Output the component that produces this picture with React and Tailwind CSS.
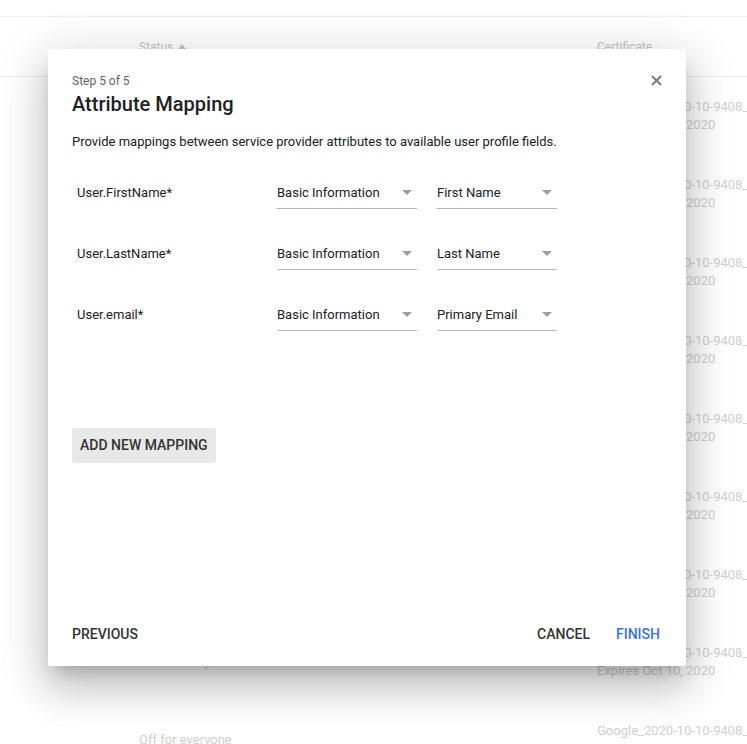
import React from "react";

const rows = [
  "On for everyone",
  "Off for everyone",
  "On for everyone",
  "Off for everyone",
  "On for everyone",
  "Off for everyone",
  "On for everyone",
  "Off for everyone",
  "Off for everyone",
];

const mappings = [
  { label: "User.FirstName*", a: "Basic Information", b: "First Name" },
  { label: "User.LastName*", a: "Basic Information", b: "Last Name" },
  { label: "User.email*", a: "Basic Information", b: "Primary Email" },
];

function Arrow() {
  return (
    <svg width="10" height="5" viewBox="0 0 10 5" className="shrink-0">
      <path d="M0 0 L10 0 L5 5 Z" fill="#9e9e9e" />
    </svg>
  );
}

function Select({ value, width }) {
  return (
    <div
      className={`flex h-8 items-center justify-between border-b border-[#b5b5b5] pr-[5px] ${width}`}
    >
      <span className="text-[13px] leading-5 text-[#212121]">{value}</span>
      <Arrow />
    </div>
  );
}

export default function App() {
  return (
    <div
      className="relative h-[744px] w-[747px] overflow-hidden bg-white"
      style={{ fontFamily: "Roboto, 'Noto Sans', sans-serif" }}
    >
      {/* Background table */}
      <div className="flex flex-col">
        <div className="h-[17px] border-b border-[#f0f0f0]" />
        <div className="flex h-[60px] items-center border-b border-[#ececec] text-[12px] text-[#c4c4c4]">
          <div className="flex w-[597px] shrink-0 items-center gap-[5px] pl-[139px]">
            <span>Status</span>
            <svg width="8" height="5" viewBox="0 0 8 5">
              <path d="M0 5 L4 0 L8 5 Z" fill="#c4c4c4" />
            </svg>
          </div>
          <div>Certificate</div>
        </div>
        {rows.map((s, i) => (
          <div
            key={i}
            className="flex h-[78px] shrink-0 items-center text-[13px] text-[#cfcfcf]"
          >
            <div className="w-[597px] shrink-0 pl-[139px]">{s}</div>
            <div className="flex flex-col whitespace-nowrap leading-[18px]">
              <span>Google_2020-10-10-9408_SAML2_0.pem</span>
              <span>Expires Oct 10, 2020</span>
            </div>
          </div>
        ))}
      </div>

      {/* Dialog */}
      <div className="absolute left-[48px] top-[49px] flex h-[617px] w-[638px] flex-col rounded-[2px] bg-white shadow-[0_11px_15px_-7px_rgba(0,0,0,0.2),0_24px_38px_3px_rgba(0,0,0,0.14),0_9px_46px_8px_rgba(0,0,0,0.12)]">
        <button className="absolute right-[24px] top-[25px] flex h-[12px] w-[12px] items-center justify-center">
          <svg width="11" height="11" viewBox="0 0 11 11">
            <path
              d="M1 1 L10 10 M10 1 L1 10"
              stroke="#7a7a7a"
              strokeWidth="2"
            />
          </svg>
        </button>

        <div className="flex flex-col px-6 pt-6">
          <div className="text-[12px] leading-4 text-[#5f6368]">Step 5 of 5</div>
          <div className="mt-px text-[20px] font-medium leading-7 text-[#202124]">
            Attribute Mapping
          </div>
          <div className="mt-[14px] text-[13px] leading-5 text-[#202124]">
            Provide mappings between service provider attributes to available
            user profile fields.
          </div>

          <div className="mt-[21px] flex flex-col gap-[21px]">
            {mappings.map((m) => (
              <div key={m.label} className="flex h-10 items-center">
                <div className="w-[205px] pl-[5px] text-[13px] leading-5 text-[#212121]">
                  {m.label}
                </div>
                <div className="flex items-center gap-5">
                  <Select value={m.a} width="w-[140px]" />
                  <Select value={m.b} width="w-[120px]" />
                </div>
              </div>
            ))}
          </div>

          <div className="mt-[93px] flex">
            <button className="h-[35px] rounded-[2px] bg-[#e8e8e8] px-2 text-[14px] font-medium text-[#333333]">
              ADD NEW MAPPING
            </button>
          </div>
        </div>

        <div className="mt-auto flex items-center justify-between pb-[22px] pl-6 pr-[26px] text-[14px] font-medium leading-5">
          <button className="text-[#333333]">PREVIOUS</button>
          <div className="flex items-center gap-[26px]">
            <button className="text-[#333333]">CANCEL</button>
            <button className="text-[#3b73d9]">FINISH</button>
          </div>
        </div>
      </div>
    </div>
  );
}
